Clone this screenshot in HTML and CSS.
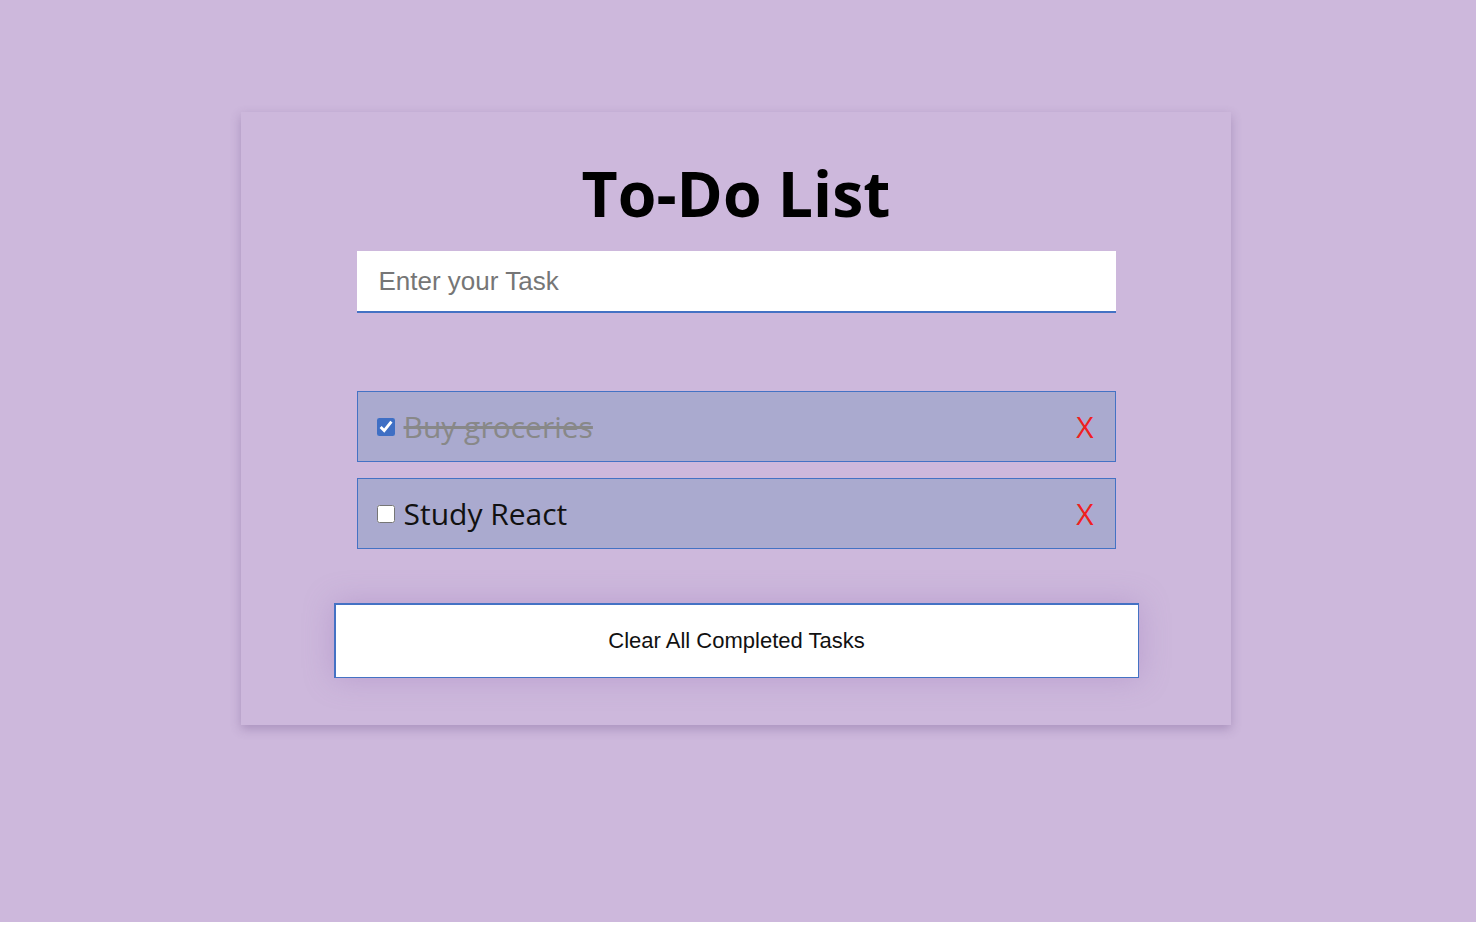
FILE: index.html
```html
<!DOCTYPE html>
<html lang="en">
<head>
<meta charset="utf-8">
<title>To-Do List</title>
<link rel="stylesheet" href="styles.css">
</head>
<body>
<main class="card">
  <h1 class="title">To-Do List</h1>
  <input class="task-input" type="text" placeholder="Enter your Task">
  <ul class="task-list">
    <li class="task">
      <input class="task-check" type="checkbox" checked>
      <span class="task-text done">Buy groceries</span>
      <button class="task-delete">X</button>
    </li>
    <li class="task">
      <input class="task-check" type="checkbox">
      <span class="task-text">Study React</span>
      <button class="task-delete">X</button>
    </li>
  </ul>
  <button class="clear-btn">Clear All Completed Tasks</button>
</main>
</body>
</html>
```

FILE: styles.css
```css
html {
  background: #ffffff;
}
body {
  margin: 0;
  min-height: 922px;
  background: #cdb8dc;
  padding: 112px 4px 0 0;
  box-sizing: border-box;
  font-family: "Open Sans", "Noto Sans", sans-serif;
}
.card {
  width: 990px;
  height: 613px;
  margin: 0 auto;
  box-sizing: border-box;
  background: #cdb8dc;
  box-shadow: 0 4px 10px rgba(90, 60, 120, 0.3);
  display: flex;
  flex-direction: column;
  align-items: center;
  padding-top: 40px;
}
.title {
  margin: 0;
  font-size: 62.5px;
  font-weight: 700;
  line-height: 82px;
  color: #000;
}
.task-input {
  margin-top: 17px;
  width: 759px;
  height: 62px;
  box-sizing: border-box;
  border: none;
  border-bottom: 2px solid #4472c4;
  background: #fff;
  padding: 0 22px;
  font-family: "Liberation Sans", Arial, sans-serif;
  font-size: 26px;
  outline: none;
}
.task-input::placeholder {
  color: #767676;
}
.task-list {
  list-style: none;
  margin: 78px 0 0;
  padding: 0;
  width: 759px;
  display: flex;
  flex-direction: column;
  gap: 16px;
}
.task {
  height: 71px;
  box-sizing: border-box;
  border: 1px solid #4472c4;
  background: #aaaacf;
  display: flex;
  align-items: center;
  padding: 0 21px 0 19px;
}
.task-check {
  margin: 0 9px 0 0;
  width: 18px;
  height: 18px;
  accent-color: #3f6fc4;
}
.task-text {
  flex: 1;
  font-size: 30px;
  color: #111;
  line-height: 1;
}
.task-text.done {
  color: #888;
  text-decoration: line-through;
}
.task-delete {
  border: none;
  background: none;
  padding: 0;
  color: #f02020;
  font-family: "Open Sans", sans-serif;
  font-size: 30px;
  line-height: 1;
  cursor: pointer;
}
.clear-btn {
  margin-top: 54px;
  width: 805px;
  height: 75px;
  background: #fff;
  border: 1px solid #4472c4;
  border-width: 2px 1px 1px 2px;
  font-family: "Liberation Sans", Arial, sans-serif;
  font-size: 22px;
  color: #111;
  box-shadow: 0 0 30px rgba(150, 110, 180, 0.35);
}
```
